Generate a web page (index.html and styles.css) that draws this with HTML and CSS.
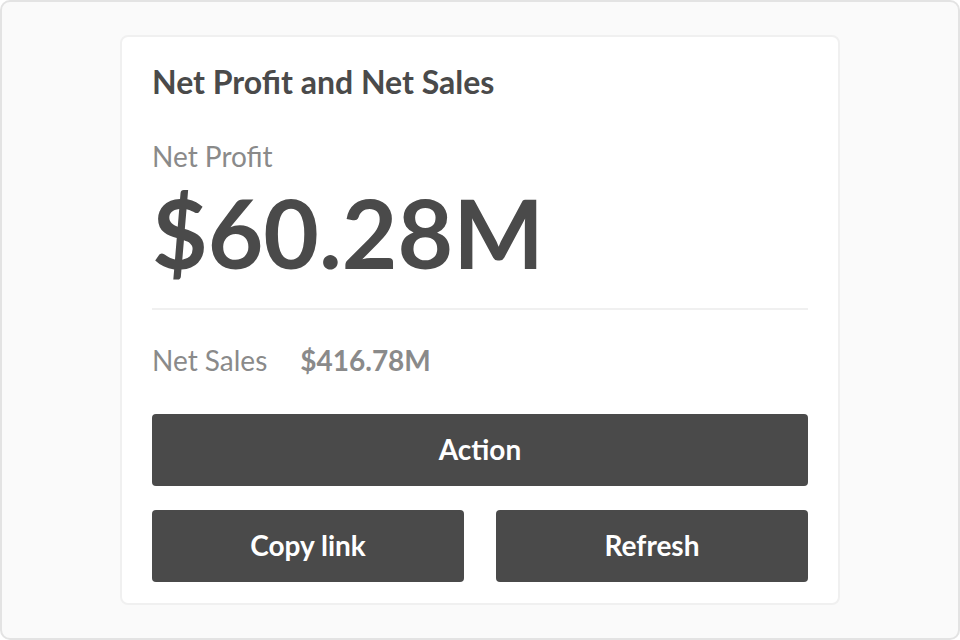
FILE: index.html
```html
<!DOCTYPE html>
<html lang="en">
<head>
<meta charset="utf-8">
<title>Net Profit and Net Sales</title>
<link rel="stylesheet" href="styles.css">
</head>
<body>
<div class="frame">
  <div class="card">
    <h1 class="title">Net Profit and Net Sales</h1>
    <div class="metric">
      <div class="metric-label">Net Profit</div>
      <div class="metric-value">$60.28M</div>
    </div>
    <hr class="divider">
    <div class="sub-row">
      <span class="sub-label">Net Sales</span>
      <span class="sub-value">$416.78M</span>
    </div>
    <div class="actions">
      <button class="btn btn-wide">Action</button>
      <div class="btn-row">
        <button class="btn">Copy link</button>
        <button class="btn">Refresh</button>
      </div>
    </div>
  </div>
</div>
</body>
</html>
```
FILE: styles.css
```css
* { box-sizing: border-box; }
html, body { margin: 0; padding: 0; }
body {
  width: 960px;
  height: 640px;
  font-family: Lato, "Noto Sans", sans-serif;
  color: #4a4a4a;
}
.frame {
  width: 960px;
  height: 640px;
  border: 2px solid #e3e3e3;
  border-radius: 10px;
  background: #fafafa;
  display: flex;
  align-items: center;
  justify-content: center;
}
.card {
  width: 720px;
  height: 570px;
  background: #fff;
  border: 2px solid #f0f0f0;
  border-radius: 8px;
  padding: 26px 30px 21px;
  display: flex;
  flex-direction: column;
}
.title {
  margin: 0 0 39px;
  font-size: 32px;
  line-height: 1.2;
  font-weight: 700;
  color: #4a4a4a;
}
.metric-label {
  font-size: 28px;
  line-height: 1.2;
  color: #8a8a8a;
}
.metric-value {
  font-size: 96px;
  line-height: 1.2;
  font-weight: 700;
  color: #4a4a4a;
}
.divider {
  margin: 19px 0 0;
  border: 0;
  height: 2px;
  background: #f0f0f0;
}
.sub-row {
  display: flex;
  gap: 33px;
  margin: 34px 0 36px;
  font-size: 28px;
  line-height: 1.2;
  color: #8a8a8a;
}
.sub-value { font-weight: 700; }
.actions {
  display: flex;
  flex-direction: column;
  gap: 24px;
}
.btn-row {
  display: flex;
  gap: 32px;
}
.btn {
  flex: 1;
  height: 72px;
  padding: 0 0 2px;
  border: 0;
  border-radius: 4px;
  background: #4a4a4a;
  color: #fff;
  font-family: Lato, "Noto Sans", sans-serif;
  font-size: 28px;
  font-weight: 700;
}
.btn-wide {
  flex: none;
  width: 100%;
}
```
